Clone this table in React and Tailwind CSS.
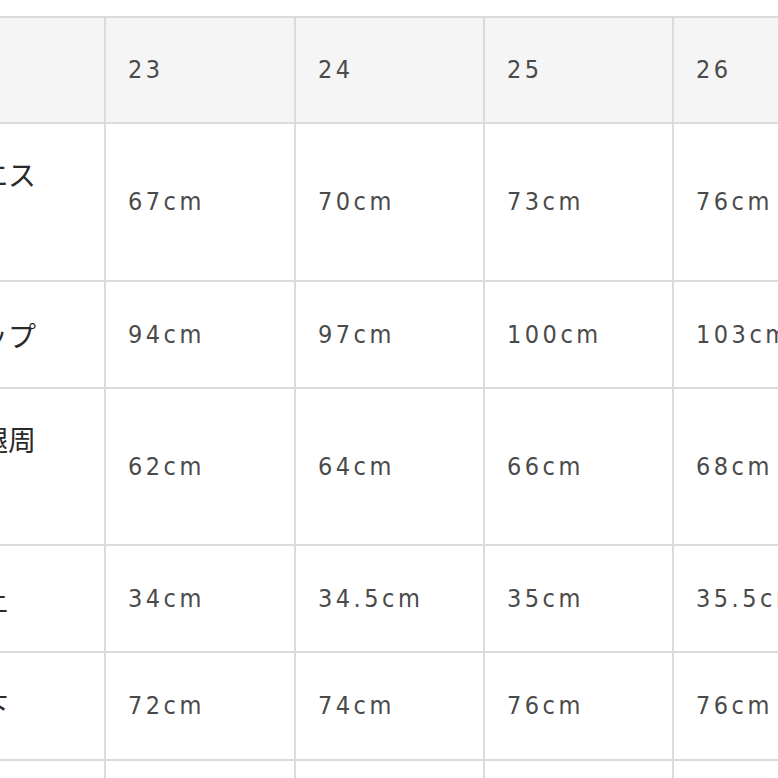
const sizes = ["23", "24", "25", "26"];

const rows = [
  { label: ["ウエス", "ト"], values: ["67cm", "70cm", "73cm", "76cm"], h: "h-[158px]" },
  { label: ["ヒップ"], values: ["94cm", "97cm", "100cm", "103cm"], h: "h-[107px]" },
  { label: ["太腿周", "り"], values: ["62cm", "64cm", "66cm", "68cm"], h: "h-[157px]" },
  { label: ["股上"], values: ["34cm", "34.5cm", "35cm", "35.5cm"], h: "h-[107px]" },
  { label: ["股下"], values: ["72cm", "74cm", "76cm", "76cm"], h: "h-[108px]" },
];

const num = "font-['Liberation_Sans_Narrow','DejaVu_Sans_Condensed',sans-serif] text-[25px] tracking-[3.5px] text-[#4a4a4a]";
const cell = "border-2 border-[#dbdbdb] pl-[22px] align-middle text-left";

export default function App() {
  return (
    <div className="w-[778px] h-[778px] overflow-hidden bg-white">
      <table className="table-fixed border-collapse mt-[16px] -ml-[68px] w-[932px]">
        <colgroup>
          <col className="w-[172px]" />
          <col className="w-[190px]" />
          <col className="w-[189px]" />
          <col className="w-[189px]" />
          <col className="w-[192px]" />
        </colgroup>
        <thead>
          <tr className="h-[106px] bg-[#f5f5f5]">
            <th className={cell}></th>
            {sizes.map((s) => (
              <th key={s} className={`${cell} font-normal ${num}`}>{s}</th>
            ))}
          </tr>
        </thead>
        <tbody>
          {rows.map((r, i) => (
            <tr key={i} className={r.h}>
              <td className={`${cell} !pl-[18px] font-['Noto_Sans_CJK_JP',sans-serif] text-[28px] leading-[56px] text-[#2a2a2a] whitespace-nowrap`}>
                {r.label.map((l, j) => (
                  <div key={j}>{l}</div>
                ))}
              </td>
              {r.values.map((v, j) => (
                <td key={j} className={`${cell} ${num} whitespace-nowrap`}>{v}</td>
              ))}
            </tr>
          ))}
          <tr className="h-[107px]">
            <td className={cell}></td>
            <td className={cell}></td>
            <td className={cell}></td>
            <td className={cell}></td>
            <td className={cell}></td>
          </tr>
        </tbody>
      </table>
    </div>
  );
}
